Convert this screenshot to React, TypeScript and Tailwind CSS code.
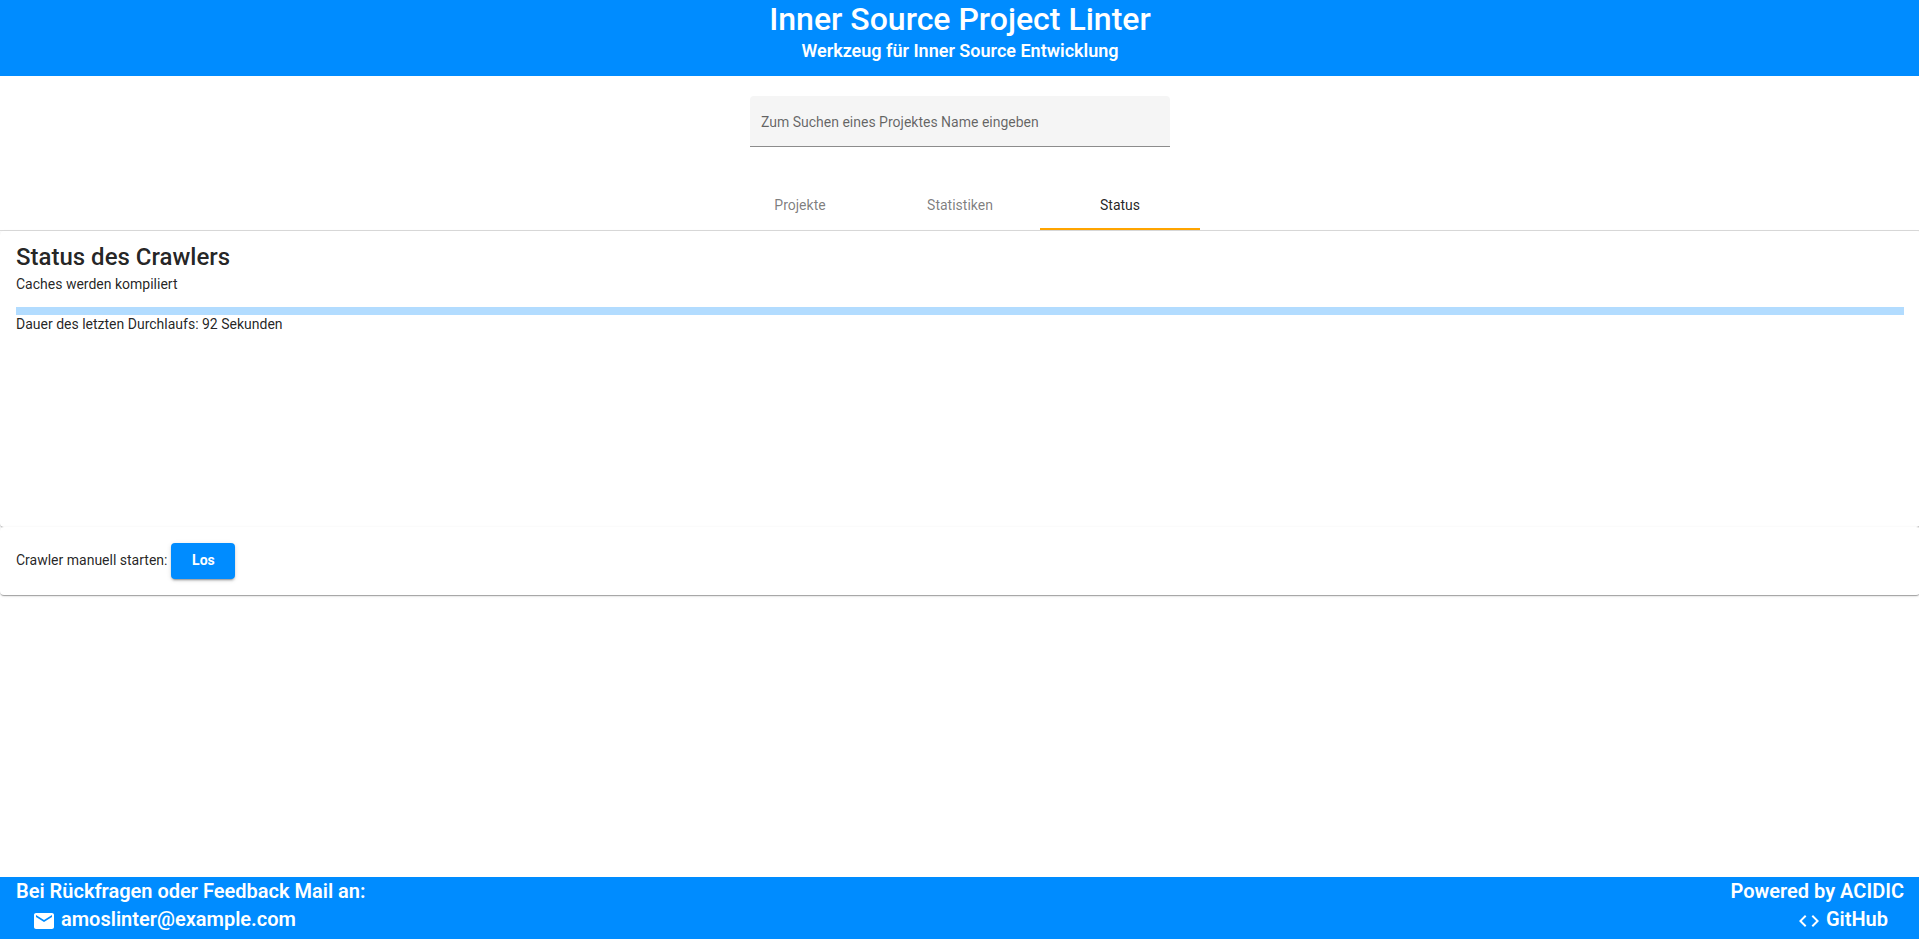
const cardShadow =
  'shadow-[0_2px_1px_-1px_rgba(0,0,0,0.2),0_1px_1px_0_rgba(0,0,0,0.14),0_1px_3px_0_rgba(0,0,0,0.12)]';

function MailIcon() {
  return (
    <svg viewBox="0 0 24 24" className="size-6 shrink-0" fill="currentColor" aria-hidden="true">
      <path d="M20 4H4c-1.100 0-1.990.9-1.990 2L2 18c0 1.100.9 2 2 2h16c1.100 0 2-.9 2-2V6c0-1.100-.9-2-2-2zm0 4l-8 5-8-5V6l8 5 8-5v2z" />
    </svg>
  );
}

function CodeIcon() {
  return (
    <svg viewBox="0 0 24 24" className="size-6 shrink-0" fill="currentColor" aria-hidden="true">
      <path d="M9.400 16.600L4.800 12l4.600-4.600L8 6l-6 6 6 6 1.400-1.400zm5.200 0l4.600-4.600-4.600-4.600L16 6l6 6-6 6-1.400-1.400z" />
    </svg>
  );
}

const tabs = ['Projekte', 'Statistiken', 'Status'];

export default function App() {
  return (
    <div className="overflow-hidden">
      <div className="flex h-[939px] w-[1920px] flex-col overflow-hidden bg-white font-[Roboto,sans-serif] text-sm text-black/87">
        <header className="flex h-[76px] shrink-0 flex-col items-center bg-[#008cff] text-white">
          <h1 className="h-[38px] text-[32px] leading-[38px] font-medium">Inner Source Project Linter</h1>
          <p className="text-lg leading-[26px] font-semibold">Werkzeug für Inner Source Entwicklung</p>
        </header>

        <div className="mx-auto mt-5 h-[51px] w-[420px] shrink-0 rounded-t border-b border-[#8c8c8c] bg-[#f5f5f5]">
          <input
            className="block h-[50px] w-full px-[11px] pt-0.5 text-sm outline-none placeholder:text-black/60"
            placeholder="Zum Suchen eines Projektes Name eingeben"
          />
        </div>

        <nav className="mt-[34px] flex h-[50px] shrink-0 justify-center border-b border-[#dbdbdb]">
          {tabs.map((tab) => (
            <button
              key={tab}
              className={
                tab === 'Status'
                  ? 'flex w-40 items-center justify-center border-b-2 border-[#ffa500]'
                  : 'flex w-40 items-center justify-center border-b-2 border-transparent text-black/52'
              }
            >
              {tab}
            </button>
          ))}
        </nav>

        <main className="flex-1">
          <section className={`h-[296px] rounded px-4 pt-2.5 ${cardShadow}`}>
            <h2 className="text-2xl leading-8 font-medium">Status des Crawlers</h2>
            <p className="mt-px leading-5">Caches werden kompiliert</p>
            <div className="mt-[13px] h-2 bg-[#b2dcff]" />
            <p className="-mt-px leading-5">Dauer des letzten Durchlaufs: 92 Sekunden</p>
          </section>
          <section className={`relative flex h-[68px] items-center rounded bg-white px-4 ${cardShadow}`}>
            <span className="-mt-0.5">Crawler manuell starten:</span>
            <button className="ml-1 h-9 w-16 rounded bg-[#008cff] pb-0.5 text-sm font-bold text-white shadow-[0_3px_1px_-2px_rgba(0,0,0,0.2),0_2px_2px_0_rgba(0,0,0,0.14),0_1px_5px_0_rgba(0,0,0,0.12)]">
              Los
            </button>
          </section>
        </main>

        <footer className="flex h-[62px] shrink-0 justify-between bg-[#008cff] px-4 text-xl font-semibold text-white">
          <div>
            <p className="leading-7">Bei Rückfragen oder Feedback Mail an:</p>
            <a className="flex items-center gap-[5px] pl-4 leading-7">
              <span className="pt-1"><MailIcon /></span>
              amoslinter@example.com
            </a>
          </div>
          <div className="flex flex-col items-end">
            <p className="leading-7">Powered by ACIDIC</p>
            <a className="flex items-center gap-[5px] pr-4 leading-7">
              <span className="pt-1"><CodeIcon /></span>
              GitHub
            </a>
          </div>
        </footer>
      </div>
    </div>
  );
}
